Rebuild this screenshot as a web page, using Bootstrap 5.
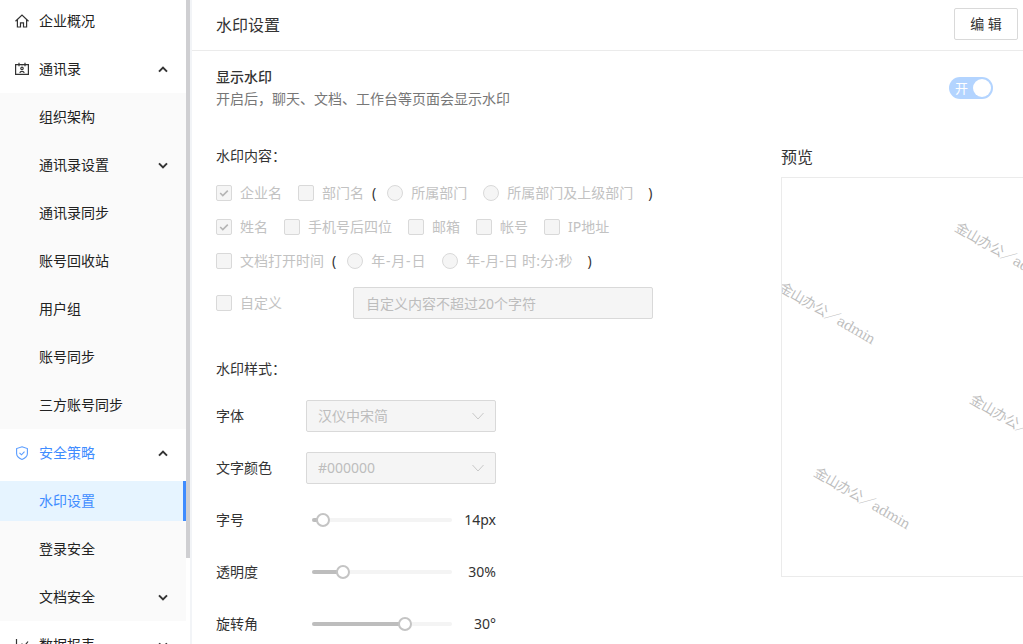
<!doctype html>
<html lang="zh-CN">
<head>
<meta charset="utf-8">
<title>水印设置</title>
<link href="https://cdn.jsdelivr.net/npm/bootstrap@5.3.0/dist/css/bootstrap.min.css" rel="stylesheet">
<style>
html,body{height:100%;overflow:hidden;background:#fff}
body{font-family:"Noto Sans","Noto Sans CJK SC",sans-serif;font-size:14px;line-height:20px;color:#333}
.shell{height:644px;width:1023px;overflow:hidden}
.side{width:192px;flex:none;height:644px;overflow:hidden}
.side-nav{width:186px;flex:none;margin-top:-3px}
.side-rail{width:6px;flex:none;background:linear-gradient(90deg,#fff 0 4px,#f2f4f7 4px)}
.side-thumb{width:4px;height:558px;background:#cfcfd2}
.nav-row{height:48px;padding:0 18px 0 15px;color:#222;gap:10px}
.nav-row .nav-ico{width:14px;height:14px;flex:none}
.nav-row .chev{width:10px;height:7px;flex:none;margin-left:auto}
.nav-row.is-open{color:#3f8cff}
.sub-list{background:#fafafa}
.sub-row{height:48px;padding:0 18px 0 39px;color:#222}
.sub-row .chev{width:10px;height:7px;margin-left:auto}
.sub-on-wrap{padding:4px 0;background:linear-gradient(#fff 0 4px,#fafafa 4px)}
.sub-on{height:40px;padding-left:39px;color:#3f8cff;background:#e6f4ff;border-right:3px solid #3f8cff}
.main-pane{min-width:0;width:831px}
.top-bar{height:51px;border-bottom:1px solid #ebebeb;padding:0 5px 0 24px}
.top-title{font-size:16px}
.edit-btn{width:64px;height:32px;padding:0;font-size:14px;color:#333;background:#fff;border:1px solid #d9d9d9;border-radius:2px;margin-top:-3px}
.show-block{padding:16px 30px 0 24px}
.show-name{font-weight:500;font-size:14px;color:#333}
.show-desc{color:#777;font-size:14px;margin-top:2px}
.sw{width:44px;height:22px;border-radius:11px;background:#b3d4ff;color:#fff;font-size:13px;padding:0 2px 0 6px;margin-top:-1px}
.sw i{display:block;width:18px;height:18px;border-radius:50%;background:#fff;margin-left:auto}
.body-row{margin-top:37px;padding-left:24px}
.form-col{width:565px;flex:none}
.chk-row{height:34px;gap:16px;color:#c2c2c2}
.chk-item{gap:8px;white-space:nowrap}
.chk-row .form-check-input,.cust-row .form-check-input{width:16px;height:16px;margin:0;flex:none;background-color:#f5f5f5;border:1px solid #d9d9d9;opacity:1}
.chk-row .form-check-input[type=checkbox],.cust-row .form-check-input[type=checkbox]{border-radius:2px}
.chk-row .form-check-input:checked{background-color:#f5f5f5;border-color:#d9d9d9;background-size:12px;background-image:url("data:image/svg+xml,%3csvg xmlns='http://www.w3.org/2000/svg' viewBox='0 0 12 12'%3e%3cpath fill='none' stroke='%23b5b5b5' stroke-width='1.6' d='M2.2 6l2.6 2.6 5-5'/%3e%3c/svg%3e")}
.form-check-input:disabled~.chk-text,.chk-text{opacity:1;color:#c2c2c2}
.date-short{letter-spacing:.8px}
.date-long{letter-spacing:.2px}
.paren{color:#333;margin:0 -5px 0 -8px}
.paren-end{color:#333;margin-left:-1px}
.first-rows{margin-top:10px}
.cust-row{margin-top:9px;height:32px;color:#c2c2c2}
.cust-label{width:137px;flex:none;gap:8px}
.cust-input,.cust-input:disabled{width:300px;height:32px;border-radius:2px;font-size:14px;padding:0 12px;background:#f5f5f5;border:1px solid #d9d9d9}
.cust-input::placeholder{color:#bdbdbd}
.sect-title{color:#333}
.style-title{margin-top:40px}
.style-rows{margin-top:21px;gap:20px}
.style-row{height:32px;color:#333}
.style-label{width:90px;flex:none}
.style-select{width:190px;height:32px;padding:0 30px 0 11px;font-size:14px;line-height:30px;border-radius:2px;color:#bdbdbd;background-color:#f5f5f5;border:1px solid #d9d9d9;background-size:14px 8px;background-position:right 10px center;background-image:url("data:image/svg+xml,%3csvg xmlns='http://www.w3.org/2000/svg' viewBox='0 0 14 8'%3e%3cpath fill='none' stroke='%23c8c8c8' d='M1.5 1l5.5 6 5.5-6'/%3e%3c/svg%3e")}
.style-select:disabled{background-color:#f5f5f5;color:#bdbdbd}
.slide-wrap{width:140px;height:4px;margin-left:6px;background:#f4f4f4;border-radius:2px;position:relative;flex:none}
.slide-fill{height:4px;background:#bdbdbd;border-radius:2px}
.slide-knob{position:absolute;top:-5px;width:14px;height:14px;margin-left:-7px;border-radius:50%;background:#fff;border:2px solid #c4c4c4}
.slide-val{width:44px;text-align:right;flex:none}
.prev-col{width:400px;flex:none}
.prev-title{font-size:16px;line-height:22px;color:#333;margin-bottom:9px}
.prev-box{width:400px;height:400px;border:1px solid #ebebeb;position:relative;overflow:hidden;background:#fff}
.wm{position:absolute;white-space:nowrap;font-size:14px;letter-spacing:-.6px;line-height:20px;color:#000;opacity:.26;transform:translate(-50%,-50%) rotate(30deg);font-family:"DejaVu Serif","Noto Sans CJK SC",serif}
.wm-a{left:45px;top:135px}
.wm-b{left:80px;top:320px}
.wm-c{left:221px;top:75px}
.wm-d{left:236px;top:247px}
</style>
</head>
<body>
<div class="shell d-flex">
  <aside class="side d-flex">
    <nav class="side-nav">
      <div class="nav-row d-flex align-items-center">
        <svg class="nav-ico" viewBox="0 0 14 14" fill="none" stroke="#333" stroke-width="1.2"><path d="M.5 7.2L7 1l6.5 6.2M2.4 5.6V13h3.1V8.8h3V13h3.1V5.6"/></svg>
        <span>企业概况</span>
      </div>
      <div class="nav-row d-flex align-items-center">
        <svg class="nav-ico" viewBox="0 0 14 14" fill="none" stroke="#333" stroke-width="1.2"><path d="M.6 2.6h12.8v9.8H.6zM4 .8v3.4M10 .8v3.4"/><path d="M5.8 2.6h2.4"/><circle cx="7" cy="6.4" r="1.2"/><path d="M4.8 10.8c.4-2 4-2 4.4 0"/></svg>
        <span>通讯录</span>
        <svg class="chev" viewBox="0 0 10 7" fill="none" stroke="#333" stroke-width="2"><path d="M1 5.6l4-4 4 4"/></svg>
      </div>
      <div class="sub-list">
        <div class="sub-row d-flex align-items-center">组织架构</div>
        <div class="sub-row d-flex align-items-center">通讯录设置<svg class="chev" viewBox="0 0 10 7" fill="none" stroke="#333" stroke-width="2"><path d="M1 1.4l4 4 4-4"/></svg></div>
        <div class="sub-row d-flex align-items-center">通讯录同步</div>
        <div class="sub-row d-flex align-items-center">账号回收站</div>
        <div class="sub-row d-flex align-items-center">用户组</div>
        <div class="sub-row d-flex align-items-center">账号同步</div>
        <div class="sub-row d-flex align-items-center">三方账号同步</div>
      </div>
      <div class="nav-row is-open d-flex align-items-center">
        <svg class="nav-ico" viewBox="0 0 14 14" fill="none" stroke="#5b9dff" stroke-width="1.1"><path d="M7 .8l5.4 1.8v5c0 3-2.6 4.8-5.4 5.8-2.8-1-5.4-2.8-5.4-5.8v-5z"/><path d="M4.5 6.8l2 2 3-3.2"/></svg>
        <span>安全策略</span>
        <svg class="chev" viewBox="0 0 10 7" fill="none" stroke="#333" stroke-width="2"><path d="M1 5.6l4-4 4 4"/></svg>
      </div>
      <div class="sub-list">
        <div class="sub-on-wrap"><div class="sub-on d-flex align-items-center">水印设置</div></div>
        <div class="sub-row d-flex align-items-center">登录安全</div>
        <div class="sub-row d-flex align-items-center">文档安全<svg class="chev" viewBox="0 0 10 7" fill="none" stroke="#333" stroke-width="2"><path d="M1 1.4l4 4 4-4"/></svg></div>
      </div>
      <div class="nav-row d-flex align-items-center">
        <svg class="nav-ico" viewBox="0 0 14 14" fill="none" stroke="#333" stroke-width="1.2"><path d="M1.5 1v12h12M4 10l3-4 2.5 2L13 3.5"/></svg>
        <span>数据报表</span>
        <svg class="chev" viewBox="0 0 10 7" fill="none" stroke="#333" stroke-width="2"><path d="M1 1.4l4 4 4-4"/></svg>
      </div>
    </nav>
    <div class="side-rail"><div class="side-thumb"></div></div>
  </aside>
  <main class="main-pane">
    <header class="top-bar d-flex align-items-center justify-content-between">
      <div class="top-title">水印设置</div>
      <button class="btn edit-btn" type="button">编 辑</button>
    </header>
    <section class="show-block d-flex justify-content-between align-items-center">
      <div>
        <div class="show-name">显示水印</div>
        <div class="show-desc">开启后，聊天、文档、工作台等页面会显示水印</div>
      </div>
      <div class="sw d-flex align-items-center"><span>开</span><i></i></div>
    </section>
    <div class="body-row d-flex">
      <div class="form-col">
        <div class="sect-title">水印内容：</div>
        <div class="first-rows">
          <div class="chk-row d-flex align-items-center">
            <label class="chk-item d-flex align-items-center"><input class="form-check-input" type="checkbox" checked disabled><span class="chk-text">企业名</span></label>
            <label class="chk-item d-flex align-items-center"><input class="form-check-input" type="checkbox" disabled><span class="chk-text">部门名</span></label>
            <span class="paren">(</span>
            <label class="chk-item d-flex align-items-center"><input class="form-check-input" type="radio" disabled><span class="chk-text">所属部门</span></label>
            <label class="chk-item d-flex align-items-center"><input class="form-check-input" type="radio" disabled><span class="chk-text">所属部门及上级部门</span></label>
            <span class="paren-end">)</span>
          </div>
          <div class="chk-row d-flex align-items-center">
            <label class="chk-item d-flex align-items-center"><input class="form-check-input" type="checkbox" checked disabled><span class="chk-text">姓名</span></label>
            <label class="chk-item d-flex align-items-center"><input class="form-check-input" type="checkbox" disabled><span class="chk-text">手机号后四位</span></label>
            <label class="chk-item d-flex align-items-center"><input class="form-check-input" type="checkbox" disabled><span class="chk-text">邮箱</span></label>
            <label class="chk-item d-flex align-items-center"><input class="form-check-input" type="checkbox" disabled><span class="chk-text">帐号</span></label>
            <label class="chk-item d-flex align-items-center"><input class="form-check-input" type="checkbox" disabled><span class="chk-text">IP地址</span></label>
          </div>
          <div class="chk-row d-flex align-items-center">
            <label class="chk-item d-flex align-items-center"><input class="form-check-input" type="checkbox" disabled><span class="chk-text">文档打开时间</span></label>
            <span class="paren">(</span>
            <label class="chk-item d-flex align-items-center"><input class="form-check-input" type="radio" disabled><span class="chk-text date-short">年-月-日</span></label>
            <label class="chk-item d-flex align-items-center"><input class="form-check-input" type="radio" disabled><span class="chk-text date-long">年-月-日 时:分:秒</span></label>
            <span class="paren-end">)</span>
          </div>
        </div>
        <div class="cust-row d-flex align-items-center">
          <label class="cust-label d-flex align-items-center"><input class="form-check-input" type="checkbox" disabled><span class="chk-text">自定义</span></label>
          <input class="form-control cust-input" type="text" placeholder="自定义内容不超过20个字符" disabled>
        </div>
        <div class="sect-title style-title">水印样式：</div>
        <div class="style-rows d-flex flex-column">
          <div class="style-row d-flex align-items-center">
            <div class="style-label">字体</div>
            <select class="form-select style-select" disabled><option>汉仪中宋简</option></select>
          </div>
          <div class="style-row d-flex align-items-center">
            <div class="style-label">文字颜色</div>
            <select class="form-select style-select" disabled><option>#000000</option></select>
          </div>
          <div class="style-row d-flex align-items-center">
            <div class="style-label">字号</div>
            <div class="slide-wrap"><div class="slide-fill" style="width:11px"></div><div class="slide-knob" style="left:11px"></div></div>
            <div class="slide-val">14px</div>
          </div>
          <div class="style-row d-flex align-items-center">
            <div class="style-label">透明度</div>
            <div class="slide-wrap"><div class="slide-fill" style="width:31px"></div><div class="slide-knob" style="left:31px"></div></div>
            <div class="slide-val">30%</div>
          </div>
          <div class="style-row d-flex align-items-center">
            <div class="style-label">旋转角</div>
            <div class="slide-wrap"><div class="slide-fill" style="width:93px"></div><div class="slide-knob" style="left:93px"></div></div>
            <div class="slide-val">30°</div>
          </div>
        </div>
      </div>
      <div class="prev-col">
        <div class="prev-title">预览</div>
        <div class="prev-box">
          <span class="wm wm-a">金山办公／admin</span>
          <span class="wm wm-b">金山办公／admin</span>
          <span class="wm wm-c">金山办公／admin</span>
          <span class="wm wm-d">金山办公／admin</span>
        </div>
      </div>
    </div>
  </main>
</div>
<script src="https://cdn.jsdelivr.net/npm/bootstrap@5.3.0/dist/js/bootstrap.bundle.min.js"></script>
</body>
</html>
